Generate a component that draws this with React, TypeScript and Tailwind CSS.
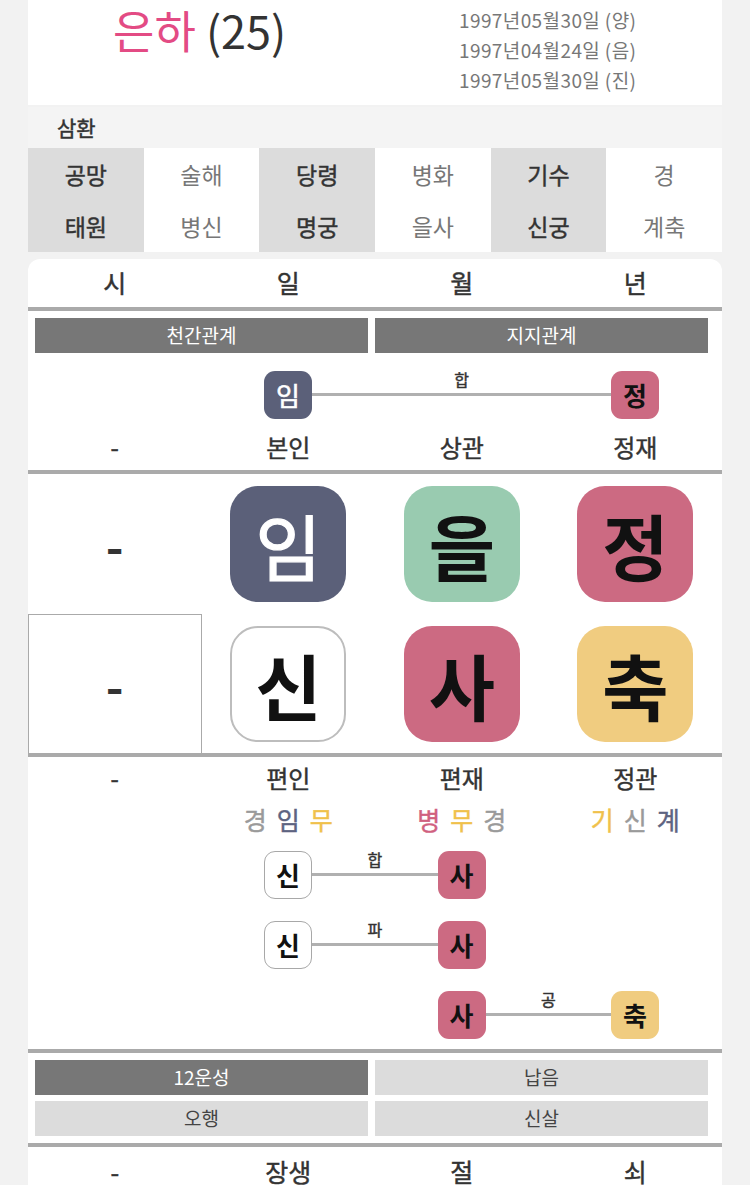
import React from "react";

const MED = "font-normal [-webkit-text-stroke:0.45px]";

function SmallTile({ ch, cls }: { ch: string; cls: string }) {
  return (
    <div
      className={
        "w-[48px] h-[48px] shrink-0 rounded-[11px] flex items-center justify-center text-[26px] leading-none " +
        cls
      }
    >
      {ch}
    </div>
  );
}

function BigTile({ ch, cls }: { ch: string; cls: string }) {
  return (
    <div
      className={
        "w-[116px] h-[116px] rounded-[28px] flex items-center justify-center text-[72px] font-bold leading-none " +
        cls
      }
    >
      {ch}
    </div>
  );
}

function Connector({ label, w }: { label: string; w: string }) {
  return (
    <div className={"shrink-0 h-[48px] flex flex-col items-center " + w}>
      <div className={"h-[16px] leading-[16px] text-[16px] text-[#333] " + MED}>{label}</div>
      <div className="mt-[6px] h-[3px] w-full bg-[#b0b0b0]" />
    </div>
  );
}

const slateTile = "bg-[#5b6079] text-white font-normal [-webkit-text-stroke:0.6px]";
const pinkTile = "bg-[#cc6a82] text-[#111] font-bold";
const whiteTile = "bg-white border border-[#a8a8a8] text-[#111] font-bold";
const yellowTile = "bg-[#f0cc80] text-[#111] font-bold";

function Line() {
  return <div className="h-[4px] bg-[#aaaaaa]" />;
}

function Row4({ items, cls }: { items: string[]; cls: string }) {
  return (
    <div className={"grid grid-cols-4 text-center text-[#333] " + cls}>
      {items.map((t, i) => (
        <div key={i}>{t}</div>
      ))}
    </div>
  );
}

export default function App() {
  const table = [
    { top: "공망", bot: "태원", gray: true },
    { top: "술해", bot: "병신", gray: false },
    { top: "당령", bot: "명궁", gray: true },
    { top: "병화", bot: "을사", gray: false },
    { top: "기수", bot: "신궁", gray: true },
    { top: "경", bot: "계축", gray: false },
  ];
  return (
    <div className="min-h-[1185px] bg-[#f2f2f2] font-['Noto_Sans_CJK_KR','Noto_Sans',sans-serif]">
      <div className="mx-[28px]">
        {/* header */}
        <div className="h-[105px] bg-white flex">
          <div className="pl-[85px] w-[431px] pt-[5px] text-[45px] leading-[50px] whitespace-nowrap">
            <span className="text-[#e34b84]">은하</span>{" "}
            <span className="text-[#333]">(25)</span>
          </div>
          <div className="pt-[5px] text-[19px] leading-[30px] text-[#777] whitespace-nowrap tracking-[0.4px]">
            <div>1997년05월30일 (양)</div>
            <div>1997년04월24일 (음)</div>
            <div>1997년05월30일 (진)</div>
          </div>
        </div>
        <div className="h-[2px]" />
        <div className={"h-[41px] bg-[#f4f4f4] pl-[29px] flex items-center text-[21px] text-[#333] " + MED}>
          삼환
        </div>
        <div className="grid grid-cols-6 bg-white">
          {table.map((c, i) => (
            <div key={i} className={c.gray ? "bg-[#dcdcdc] text-[#333] " + MED : "bg-white text-[#777]"}>
              <div className="h-[52px] flex items-center justify-center text-[23px]">{c.top}</div>
              <div className="h-[52px] flex items-center justify-center text-[23px]">{c.bot}</div>
            </div>
          ))}
        </div>
        <div className="h-[7px]" />

        {/* main card */}
        <div className="bg-white rounded-t-[12px]">
          <Row4 items={["시", "일", "월", "년"]} cls={"h-[48px] items-center text-[25px] " + MED} />
          <Line />
          <div className="pl-[7px] pr-[14px] pt-[7px] grid grid-cols-2 gap-[7px]">
            <div className="h-[35px] bg-[#777] text-white text-[19px] flex items-center justify-center">천간관계</div>
            <div className="h-[35px] bg-[#777] text-white text-[19px] flex items-center justify-center">지지관계</div>
          </div>
          <div className="mt-[18px] flex h-[48px]">
            <div className="w-[236px] shrink-0" />
            <SmallTile ch="임" cls={slateTile} />
            <Connector label="합" w="w-[299px]" />
            <SmallTile ch="정" cls={pinkTile} />
          </div>
          <Row4 items={["-", "본인", "상관", "정재"]} cls={"h-[51px] pt-[5px] items-center text-[24px] " + MED} />
          <Line />

          {/* big tiles */}
          <div className="grid grid-cols-4 h-[140px] items-center">
            <div className="flex justify-center text-[48px] font-bold text-[#333] leading-none">-</div>
            <div className="flex justify-center">
              <BigTile ch="임" cls="bg-[#5b6079] text-white !font-normal [-webkit-text-stroke:1.2px]" />
            </div>
            <div className="flex justify-center">
              <BigTile ch="을" cls="bg-[#99cbb0] text-[#111]" />
            </div>
            <div className="flex justify-center">
              <BigTile ch="정" cls="bg-[#cc6a82] text-[#111]" />
            </div>
          </div>
          <div className="grid grid-cols-4 h-[139px] items-center">
            <div className="h-full border border-b-0 border-[#aaa] flex items-center justify-center text-[48px] font-bold text-[#333] leading-none">
              -
            </div>
            <div className="flex justify-center">
              <BigTile ch="신" cls="bg-white border-2 border-[#bdbdbd] text-[#111]" />
            </div>
            <div className="flex justify-center">
              <BigTile ch="사" cls="bg-[#cc6a82] text-[#111]" />
            </div>
            <div className="flex justify-center">
              <BigTile ch="축" cls="bg-[#f0cc80] text-[#111]" />
            </div>
          </div>
          <Line />

          <Row4 items={["-", "편인", "편재", "정관"]} cls={"h-[42px] items-center text-[24px] " + MED} />
          <div className={"grid grid-cols-4 h-[42px] items-center text-[25px] " + MED}>
            <div />
            <div className="flex justify-center gap-[10px]">
              <span className="text-[#9a9a9a]">경</span>
              <span className="text-[#5d6381]">임</span>
              <span className="text-[#f0c14b]">무</span>
            </div>
            <div className="flex justify-center gap-[10px]">
              <span className="text-[#d0607f]">병</span>
              <span className="text-[#f0c14b]">무</span>
              <span className="text-[#9a9a9a]">경</span>
            </div>
            <div className="flex justify-center gap-[10px]">
              <span className="text-[#f0c14b]">기</span>
              <span className="text-[#9a9a9a]">신</span>
              <span className="text-[#5d6381]">계</span>
            </div>
          </div>

          <div className="pt-[10px] pb-[10px] flex flex-col gap-[22px]">
            <div className="flex h-[48px]">
              <div className="w-[236px] shrink-0" />
              <SmallTile ch="신" cls={whiteTile} />
              <Connector label="합" w="w-[125.5px]" />
              <SmallTile ch="사" cls={pinkTile} />
            </div>
            <div className="flex h-[48px]">
              <div className="w-[236px] shrink-0" />
              <SmallTile ch="신" cls={whiteTile} />
              <Connector label="파" w="w-[125.5px]" />
              <SmallTile ch="사" cls={pinkTile} />
            </div>
            <div className="flex h-[48px]">
              <div className="w-[409.5px] shrink-0" />
              <SmallTile ch="사" cls={pinkTile} />
              <Connector label="공" w="w-[125.5px]" />
              <SmallTile ch="축" cls={yellowTile} />
            </div>
          </div>
          <Line />

          <div className="pl-[7px] pr-[14px] py-[7px] grid grid-cols-2 gap-x-[7px] gap-y-[6px] text-[19px]">
            <div className="h-[35px] bg-[#777] text-white flex items-center justify-center">12운성</div>
            <div className="h-[35px] bg-[#dcdcdc] text-[#444] flex items-center justify-center">납음</div>
            <div className="h-[35px] bg-[#dcdcdc] text-[#444] flex items-center justify-center">오행</div>
            <div className="h-[35px] bg-[#dcdcdc] text-[#444] flex items-center justify-center">신살</div>
          </div>
          <Line />
          <Row4 items={["-", "장생", "절", "쇠"]} cls={"h-[50px] items-center text-[25px] " + MED} />
        </div>
      </div>
    </div>
  );
}
